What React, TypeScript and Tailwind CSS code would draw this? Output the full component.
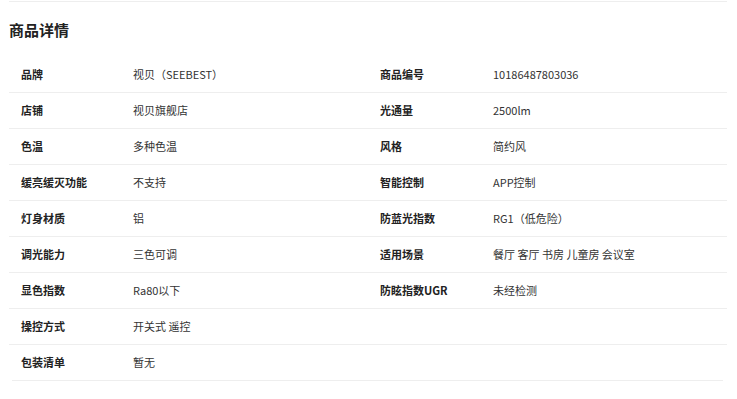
import React from "react";

const rows: [string, string, string, string][] = [
  ["品牌", "视贝（SEEBEST）", "商品编号", "10186487803036"],
  ["店铺", "视贝旗舰店", "光通量", "2500lm"],
  ["色温", "多种色温", "风格", "简约风"],
  ["缓亮缓灭功能", "不支持", "智能控制", "APP控制"],
  ["灯身材质", "铝", "防蓝光指数", "RG1（低危险）"],
  ["调光能力", "三色可调", "适用场景", "餐厅 客厅 书房 儿童房 会议室"],
  ["显色指数", "Ra80以下", "防眩指数UGR", "未经检测"],
  ["操控方式", "开关式 遥控", "", ""],
  ["包装清单", "暂无", "", ""],
];

export default function App() {
  return (
    <div className="w-[737px] h-[399px] bg-white pt-px pl-[9px] pr-[10px] font-['Noto_Sans_CJK_SC',sans-serif] text-[#333]">
      <div className="border-t border-[#eeeeee]" />
      <div className="h-[55px] leading-[55px] text-[15px] font-bold text-[#222]">商品详情</div>
      <div>
        {rows.map((r, i) => (
          <div
            key={i}
            className={
              i === rows.length - 1
                ? "grid grid-cols-[112px_247px_113px_246px] h-[35px] items-center text-[11px]"
                : "grid grid-cols-[112px_247px_113px_246px] h-[36px] items-center text-[11px] border-b border-[#eeeeee]"
            }
          >
            <div className="pl-[12px] font-bold text-[#222]">{r[0]}</div>
            <div className="pl-[12px]">{r[1]}</div>
            <div className="pl-[12px] font-bold text-[#222]">{r[2]}</div>
            <div className="pl-[12px]">{r[3]}</div>
          </div>
        ))}
        <div className="ml-[3px] mr-[4px] border-t border-[#eeeeee]" />
      </div>
    </div>
  );
}
